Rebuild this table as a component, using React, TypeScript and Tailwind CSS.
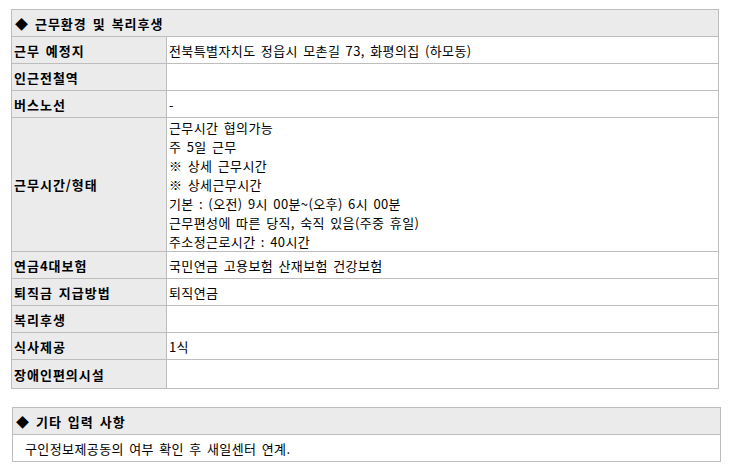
// Work environment & benefits info tables (job posting detail)

import React from "react";

interface Row {
  label: string;
  value?: string[];
  tall?: boolean;
}

const rows: Row[] = [
  { label: "근무 예정지", value: ["전북특별자치도 정읍시 모촌길 73, 화평의집 (하모동)"] },
  { label: "인근전철역" },
  { label: "버스노선", value: ["-"] },
  {
    label: "근무시간/형태",
    tall: true,
    value: [
      "근무시간 협의가능",
      "주 5일 근무",
      "※ 상세 근무시간",
      "※ 상세근무시간",
      "기본 : (오전) 9시 00분~(오후) 6시 00분",
      "근무편성에 따른 당직, 숙직 있음(주중 휴일)",
      "주소정근로시간 : 40시간",
    ],
  },
  { label: "연금4대보험", value: ["국민연금 고용보험 산재보험 건강보험"] },
  { label: "퇴직금 지급방법", value: ["퇴직연금"] },
  { label: "복리후생" },
  { label: "식사제공", value: ["1식"] },
  { label: "장애인편의시설" },
];

const SectionHeader: React.FC<{ title: string }> = ({ title }) => (
  <div className="h-[27px] flex items-center pl-[3px] bg-[#ebebeb] border-b border-[#bdbdbd] font-bold tracking-[1px]">
    ◆ {title}
  </div>
);

export default function App() {
  return (
    <div className="w-[731px] h-[472px] bg-white text-black text-[13px] leading-[19px] tracking-[0.4px] [word-spacing:2px] font-['Noto_Sans_CJK_KR',sans-serif] pt-[9px]">
      <div className="ml-[11px] w-[708px] border border-[#bdbdbd]">
        <SectionHeader title="근무환경 및 복리후생" />
        {rows.map((row, i) => (
          <div
            key={row.label}
            className={`grid grid-cols-[155px_1fr] ${i < rows.length - 1 ? "border-b border-[#bdbdbd]" : ""}`}
          >
            <div
              className={`flex items-center pl-[2px] bg-[#ebebeb] border-r border-[#bdbdbd] font-bold tracking-[1px] ${row.tall ? "h-[133px]" : i === rows.length - 1 ? "h-[28px]" : "h-[26px]"}`}
            >
              {row.label}
            </div>
            <div className="flex flex-col justify-center pl-[2px]">
              {row.value?.map((line) => (
                <div key={line}>{line}</div>
              ))}
            </div>
          </div>
        ))}
      </div>

      <div className="ml-[12px] mt-[18px] w-[709px] border border-[#bdbdbd]">
        <SectionHeader title="기타 입력 사항" />
        <div className="h-[26px] flex items-center pl-[12px]">
          구인정보제공동의 여부 확인 후 새일센터 연계.
        </div>
      </div>
    </div>
  );
}
